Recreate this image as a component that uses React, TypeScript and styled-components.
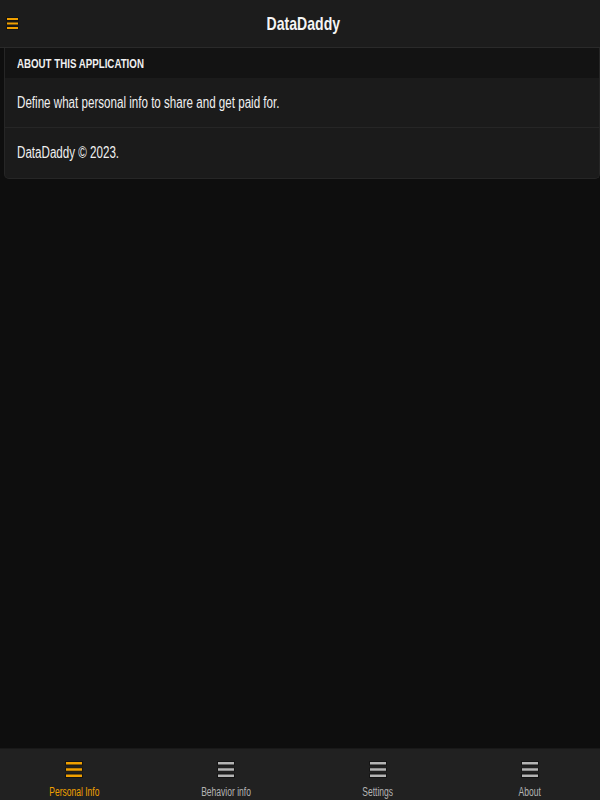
import styled, { createGlobalStyle } from "styled-components";

const GlobalStyle = createGlobalStyle`
  html, body {
    margin: 0;
    padding: 0;
    background: #0e0e0e;
    font-family: "Liberation Sans", Arial, sans-serif;
    color: #f2f2f2;
  }
  #root {
    height: 800px;
  }
`;

interface MenuIconProps {
  color: string;
  width: number;
  height: number;
  bar: number;
}

// three bars with a dark outline, like the glyph in the screenshot
const MenuIcon: React.FC<MenuIconProps> = ({ color, width, height, bar }) => {
  const gap = (height - bar * 3) / 2;
  return (
    <svg width={width} height={height} viewBox={`0 0 ${width} ${height}`}>
      {[0, 1, 2].map((i) => (
        <rect
          key={i}
          x={0.5}
          y={0.5 + i * (bar + gap)}
          width={width - 1}
          height={bar - 1}
          fill={color}
          stroke="#141414"
          strokeWidth={1}
        />
      ))}
    </svg>
  );
};

const tabs = ["Personal Info", "Behavior info", "Settings", "About"];

const App: React.FC = () => {
  return (
    <Page>
      <GlobalStyle />
      <Header>
        <MenuButton>
          <MenuIcon color="#f0a000" width={13} height={13} bar={4} />
        </MenuButton>
        <Title>
          <Narrow origin="center" scale={0.76}>
            DataDaddy
          </Narrow>
        </Title>
      </Header>

      <Content>
        <Card>
          <SectionHeader>
            <Narrow scale={0.72}>ABOUT THIS APPLICATION</Narrow>
          </SectionHeader>
          <Row>
            <Narrow>Define what personal info to share and get paid for.</Narrow>
          </Row>
          <Row last>
            <Narrow>DataDaddy © 2023.</Narrow>
          </Row>
        </Card>
      </Content>

      <TabBar>
        {tabs.map((t, i) => (
          <Tab key={t} active={i === 0}>
            <MenuIcon
              color={i === 0 ? "#f0a000" : "#b4b4b4"}
              width={18}
              height={17}
              bar={4.5}
            />
            <TabLabel>
              <Narrow origin="center" scale={0.71}>
                {t}
              </Narrow>
            </TabLabel>
          </Tab>
        ))}
      </TabBar>
    </Page>
  );
};

const Page = styled.div`
  height: 800px;
  display: flex;
  flex-direction: column;
  overflow: hidden;
`;

// the app font is a condensed sans; squeeze Liberation Sans to its width
const Narrow = styled.span<{ scale?: number; origin?: string }>`
  display: inline-block;
  white-space: nowrap;
  transform: scaleX(${(p) => p.scale ?? 0.725});
  transform-origin: ${(p) => p.origin ?? "left"} center;
`;

const Header = styled.header`
  height: 48px;
  flex-shrink: 0;
  background: #1c1c1c;
  border-bottom: 1px solid #2a2a2a;
  box-sizing: border-box;
  display: flex;
  align-items: center;
  justify-content: center;
  position: relative;
`;

const MenuButton = styled.button`
  position: absolute;
  left: 6px;
  top: 17px;
  background: transparent;
  border: none;
  padding: 0;
  line-height: 0;
`;

const Title = styled.h1`
  margin: 0 0 0 6px;
  font-size: 18.5px;
  font-weight: bold;
  color: #f4f4f4;
`;

const Content = styled.main`
  flex: 1;
  padding: 0 0 0 4px;
`;

const Card = styled.section`
  background: #1b1b1b;
  border: 1px solid #262626;
  border-top: none;
  border-radius: 0 0 5px 5px;
  overflow: hidden;
`;

const SectionHeader = styled.h2`
  margin: 0;
  height: 30px;
  display: flex;
  align-items: center;
  padding: 0 12px;
  background: #131313;
  font-size: 13.5px;
  font-weight: bold;
  color: #f0f0f0;
`;

const Row = styled.div<{ last?: boolean }>`
  height: 50px;
  display: flex;
  align-items: center;
  padding: 0 12px;
  font-size: 16px;
  color: #f0f0f0;
  border-bottom: ${(p) => (p.last ? "none" : "1px solid #262626")};
  box-sizing: border-box;
`;

const TabBar = styled.nav`
  height: 51px;
  flex-shrink: 0;
  margin: 0 -6px 0 -2px;
  background: #212121;
  border-top: 1px solid #191919;
  display: grid;
  grid-template-columns: repeat(4, 1fr);
`;

const Tab = styled.div<{ active?: boolean }>`
  display: flex;
  flex-direction: column;
  align-items: center;
  padding-top: 12px;
  color: ${(p) => (p.active ? "#f0a000" : "#b4b4b4")};
`;

const TabLabel = styled.span`
  margin-top: 7px;
  font-size: 12px;
  line-height: 14px;
`;

export default App;
